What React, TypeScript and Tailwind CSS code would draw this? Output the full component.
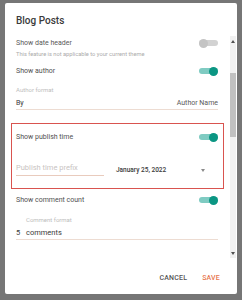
import React from "react";

function Toggle({ on }: { on: boolean }) {
  return (
    <div className="relative w-[19px] h-[9px] shrink-0">
      <div
        className={
          on
            ? "absolute left-0 right-0 top-[1.5px] h-[6px] rounded-full bg-[#7fcbc2]"
            : "absolute left-0 right-0 top-[1.5px] h-[6px] rounded-full bg-[#d2d2d2]"
        }
      />
      <div
        className={
          on
            ? "absolute right-0 top-0 w-[9px] h-[9px] rounded-full bg-[#0b9683]"
            : "absolute left-0 top-0 w-[9px] h-[9px] rounded-full bg-[#c4c4c4]"
        }
      />
    </div>
  );
}

export default function App() {
  return (
    <div className="w-[242px] h-[300px] bg-[#767676] pt-[3px] pl-[5px] font-['Roboto',sans-serif] overflow-hidden">
      <div className="w-[232px] h-[291px] bg-white rounded-[2px] flex flex-col">
        <div className="h-[33px] pl-[11px] pt-[12px] text-[10px] leading-[12px] font-medium text-[#3a3a3a]">
          Blog Posts
        </div>
        <div className="h-[222px] flex flex-row">
          <div className="flex-1 pl-[11px] pr-[12px] overflow-hidden flex flex-col text-[#505050]">
            <div className="h-[14px] shrink-0 flex items-center justify-between text-[7px] text-[#5a5a5a]">
              <span>Show date header</span>
              <Toggle on={false} />
            </div>
            <div className="h-[8px] shrink-0 text-[5.7px] leading-[8px] text-[#ababab] whitespace-nowrap">
              This feature is not applicable to your current theme
            </div>
            <div className="mt-[6px] h-[14px] shrink-0 flex items-center justify-between text-[7px]">
              <span>Show author</span>
              <Toggle on={true} />
            </div>
            <div className="mt-[8px] h-[8px] shrink-0 text-[6px] leading-[8px] text-[#bdbdbd]">
              Author format
            </div>
            <div className="mt-[3px] h-[13px] shrink-0 border-b border-[#eddcd2] flex items-center justify-between text-[7px] text-[#3a3a3a]">
              <span>By</span>
              <span className="text-[#5a5a5a]">Author Name</span>
            </div>
            <div className="mt-[13px] ml-[-5px] mr-[-6px] h-[66px] shrink-0 border border-[#d9534f] pl-[4px] pr-[5px] pt-[6px] flex flex-col">
              <div className="h-[14px] shrink-0 flex items-center justify-between text-[7px]">
                <span>Show publish time</span>
                <Toggle on={true} />
              </div>
              <div className="mt-[17px] h-[15px] shrink-0 flex flex-row">
                <div className="w-[88px] h-[15px] border-b border-[#e9cbbd] flex items-center text-[7.5px] text-[#c9c4c2]">
                  Publish time prefix
                </div>
                <div className="ml-[12px] h-[15px] pt-[4px] flex items-center text-[6.5px] font-medium text-[#3a3a3a]">
                  January 25, 2022
                </div>
                <div className="ml-auto mr-[13px] h-[15px] pt-[4px] flex items-center">
                  <div className="w-0 h-0 border-x-[2.5px] border-x-transparent border-t-[3px] border-t-[#8a8a8a]" />
                </div>
              </div>
            </div>
            <div className="mt-[4px] h-[14px] shrink-0 flex items-center justify-between text-[7px]">
              <span>Show comment count</span>
              <Toggle on={true} />
            </div>
            <div className="mt-[9px] pl-[10px] h-[8px] shrink-0 text-[6px] leading-[8px] text-[#bdbdbd]">
              Comment format
            </div>
            <div className="mt-[3px] h-[13px] shrink-0 border-b border-[#eddcd2] flex items-center text-[7.5px] text-[#3a3a3a]">
              <span className="w-[10px]">5</span>
              <span>comments</span>
            </div>
          </div>
          <div className="w-[6px] mr-[1px] bg-[#f1f1f1] flex flex-col">
            <div className="h-[10px] flex items-center justify-center">
              <div className="w-0 h-0 border-x-[2px] border-x-transparent border-b-[3px] border-b-[#505050]" />
            </div>
            <div className="h-[27px]" />
            <div className="h-[64px] bg-[#c1c1c1]" />
            <div className="flex-1" />
            <div className="h-[10px] flex items-center justify-center">
              <div className="w-0 h-0 border-x-[2px] border-x-transparent border-t-[3px] border-t-[#505050]" />
            </div>
          </div>
        </div>
        <div className="h-[36px] pt-[4px] pr-[17px] flex items-center justify-end gap-[15px] text-[7px] font-medium tracking-[0.2px]">
          <span className="text-[#555]">CANCEL</span>
          <span className="text-[#e8764f]">SAVE</span>
        </div>
      </div>
    </div>
  );
}
